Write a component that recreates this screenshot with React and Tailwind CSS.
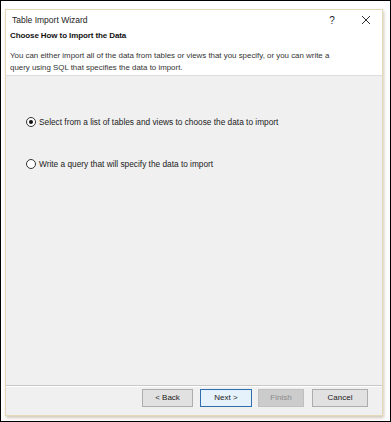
import React from "react";

const Radio = ({ checked, label }) => (
  <label className="flex items-center h-[12px]">
    <span className="w-[10px] h-[10px] rounded-full border border-[#333] bg-white flex items-center justify-center">
      {checked && <span className="w-[4px] h-[4px] rounded-full bg-[#111]" />}
    </span>
    <span className="ml-[3px] text-[8.3px] text-[#222]">{label}</span>
  </label>
);

const Button = ({ children, className }) => (
  <button
    className={
      "h-[18px] text-[8px] flex items-center justify-center border " + className
    }
  >
    {children}
  </button>
);

export default function App() {
  return (
    <div
      className="w-[391px] h-[422px] border border-black bg-white overflow-hidden"
      style={{ fontFamily: '"Liberation Sans", Arial, sans-serif' }}
    >
      {/* dialog window */}
      <div className="ml-[4px] mt-[8px] w-[378px] h-[407px] border border-[#e4d9b8] shadow-[1px_2px_3px_rgba(120,100,60,0.35)] flex flex-col bg-white">
        {/* title bar */}
        <div className="h-[20px] flex items-center pl-[6px] pr-[10px] text-[8.5px] text-[#222]">
          <span className="flex-1">Table Import Wizard</span>
          <span className="w-[12px] text-center text-[10px] mr-[22px]">?</span>
          <svg width="12" height="12" viewBox="0 0 12 12" className="text-[#333]">
            <path d="M2 2 L10 10 M10 2 L2 10" stroke="currentColor" strokeWidth="1" />
          </svg>
        </div>

        {/* header */}
        <div className="px-[4px]">
          <div className="text-[8px] font-bold leading-[12px] text-[#111] tracking-[-0.1px]">
            Choose How to Import the Data
          </div>
          <div className="mt-[8px] text-[7.9px] leading-[12px] text-[#333]">
            You can either import all of the data from tables or views that you specify, or you can write a
            <br />
            query using SQL that specifies the data to import.
          </div>
        </div>

        {/* content */}
        <div className="mt-[1px] border-t border-[#dcdcdc] flex-1 bg-[#f0f0f0] flex flex-col">
          <div className="flex-1 pl-[20px] pt-[40px] flex flex-col gap-[30px]">
            <Radio checked label="Select from a list of tables and views to choose the data to import" />
            <Radio label="Write a query that will specify the data to import" />
          </div>

          <div className="border-t border-[#c8c8c8] shadow-[0_1px_0_#fff]" />

          <div className="h-[29px] flex items-start pt-[3px] pl-[136px]">
            <Button className="w-[51px] bg-[#e1e1e1] border-[#adadad] text-[#222]">
              &lt; Back
            </Button>
            <Button className="ml-[7px] w-[52px] bg-[#e5f1fb] border-[#2f6fb0] text-[#222]">
              Next &gt;
            </Button>
            <Button className="ml-[6px] w-[46px] bg-[#cccccc] border-[#bfbfbf] text-[#8a8a8a]">
              Finish
            </Button>
            <Button className="ml-[8px] w-[56px] bg-[#e1e1e1] border-[#adadad] text-[#222]">
              Cancel
            </Button>
          </div>
        </div>
      </div>
    </div>
  );
}
